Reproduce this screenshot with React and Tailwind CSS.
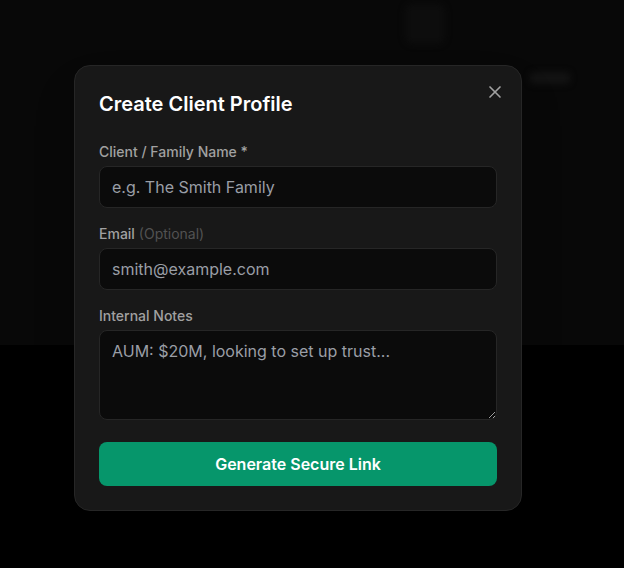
import { X } from 'lucide-react'

function Field({ label, optional, children }) {
  return (
    <div>
      <label className="block text-sm font-medium text-neutral-400 mb-1">
        {label}
        {optional && <span className="text-neutral-600 font-normal"> (Optional)</span>}
      </label>
      {children}
    </div>
  )
}

export default function App() {
  const inputCls =
    'block w-full rounded-lg border border-[#262626] bg-[#0b0b0b] px-3 py-2 text-base text-white placeholder:text-[#9a9ea6] outline-none'

  return (
    <div className="relative h-[568px] w-[624px] overflow-hidden bg-black" style={{ fontFamily: 'Inter, "Noto Sans", sans-serif' }}>
      {/* page behind the dialog */}
      <div className="h-[345px] bg-[#080808]">
        <div className="flex gap-24 pl-[405px]">
          <div className="mt-1 h-10 w-10 rounded-lg bg-[#0d0d0d] blur-[3px]" />
        </div>
        <div className="ml-[530px] mt-7 h-3 w-10 rounded bg-[#131313] blur-[3px]" />
      </div>

      {/* dialog */}
      <div className="absolute inset-0 pl-[74px] pt-[65px]">
        <div className="relative w-[448px] rounded-2xl border border-[#262626] bg-[#181818] p-6 shadow-2xl">
          <button className="absolute right-4 top-4 text-neutral-400">
            <X size={20} />
          </button>

          <h2 className="mb-6 text-xl font-semibold text-white">Create Client Profile</h2>

          <div className="space-y-4">
            <Field label="Client / Family Name *">
              <input className={inputCls} placeholder="e.g. The Smith Family" />
            </Field>
            <Field label="Email" optional>
              <input className={inputCls} placeholder="smith@example.com" />
            </Field>
            <Field label="Internal Notes">
              <textarea rows={3} className={inputCls} placeholder="AUM: $20M, looking to set up trust..." />
            </Field>
          </div>

          <button className="mt-[22px] w-full rounded-lg bg-[#06966b] py-2.5 text-base font-semibold text-white">
            Generate Secure Link
          </button>
        </div>
      </div>
    </div>
  )
}
